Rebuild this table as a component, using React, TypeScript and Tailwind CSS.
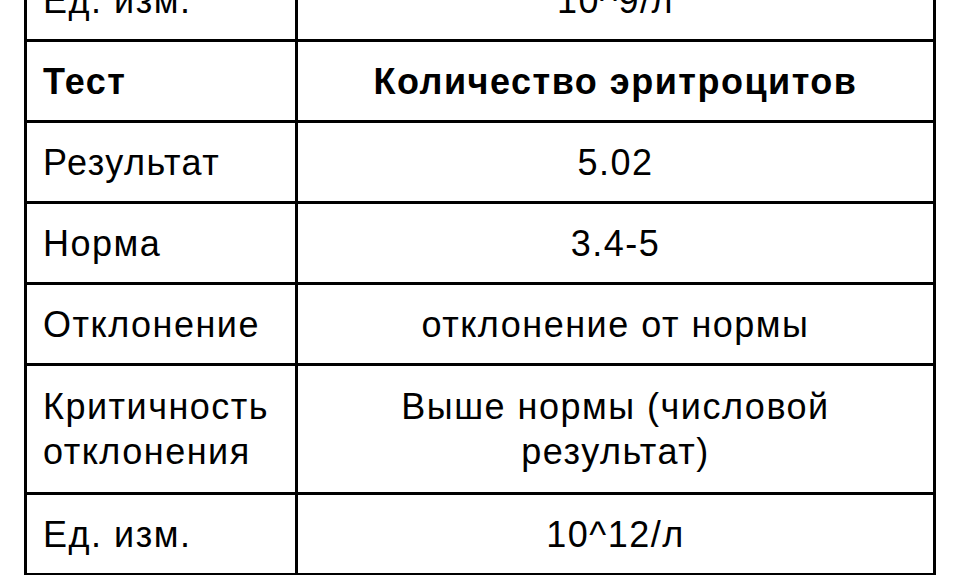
import React from 'react';

type Row = { label: React.ReactNode; value: string; bold?: boolean; tall?: boolean };

const rows: Row[] = [
  { label: 'Ед. изм.', value: '10^9/л' },
  { label: 'Тест', value: 'Количество эритроцитов', bold: true },
  { label: 'Результат', value: '5.02' },
  { label: 'Норма', value: '3.4-5' },
  { label: 'Отклонение', value: 'отклонение от нормы' },
  {
    label: (
      <>
        Критичность
        <br />
        отклонения
      </>
    ),
    value: 'Выше нормы (числовой результат)',
    tall: true,
  },
  { label: 'Ед. изм.', value: '10^12/л' },
];

const App: React.FC = () => {
  return (
    <div className="h-[575px] overflow-hidden bg-white">
      <div className="mx-6 -mt-[42px] border-[3px] border-b-0 border-black font-['Liberation_Sans',Arial,sans-serif] text-[36px] tracking-[1.5px] text-black">
        {rows.map((row, i) => (
          <div key={i} className="grid grid-cols-[271px_1fr] border-b-[3px] border-black">
            <div
              className={`border-r-[3px] border-black px-4 leading-[45px] ${row.tall ? 'py-[18px]' : 'pt-[17px] pb-[16px]'} ${row.bold ? 'font-bold' : ''}`}
            >
              {row.label}
            </div>
            <div
              className={`flex items-center justify-center px-4 text-center leading-[45px] ${row.bold ? 'font-bold' : ''}`}
            >
              {row.value}
            </div>
          </div>
        ))}
      </div>
    </div>
  );
};

export default App;
